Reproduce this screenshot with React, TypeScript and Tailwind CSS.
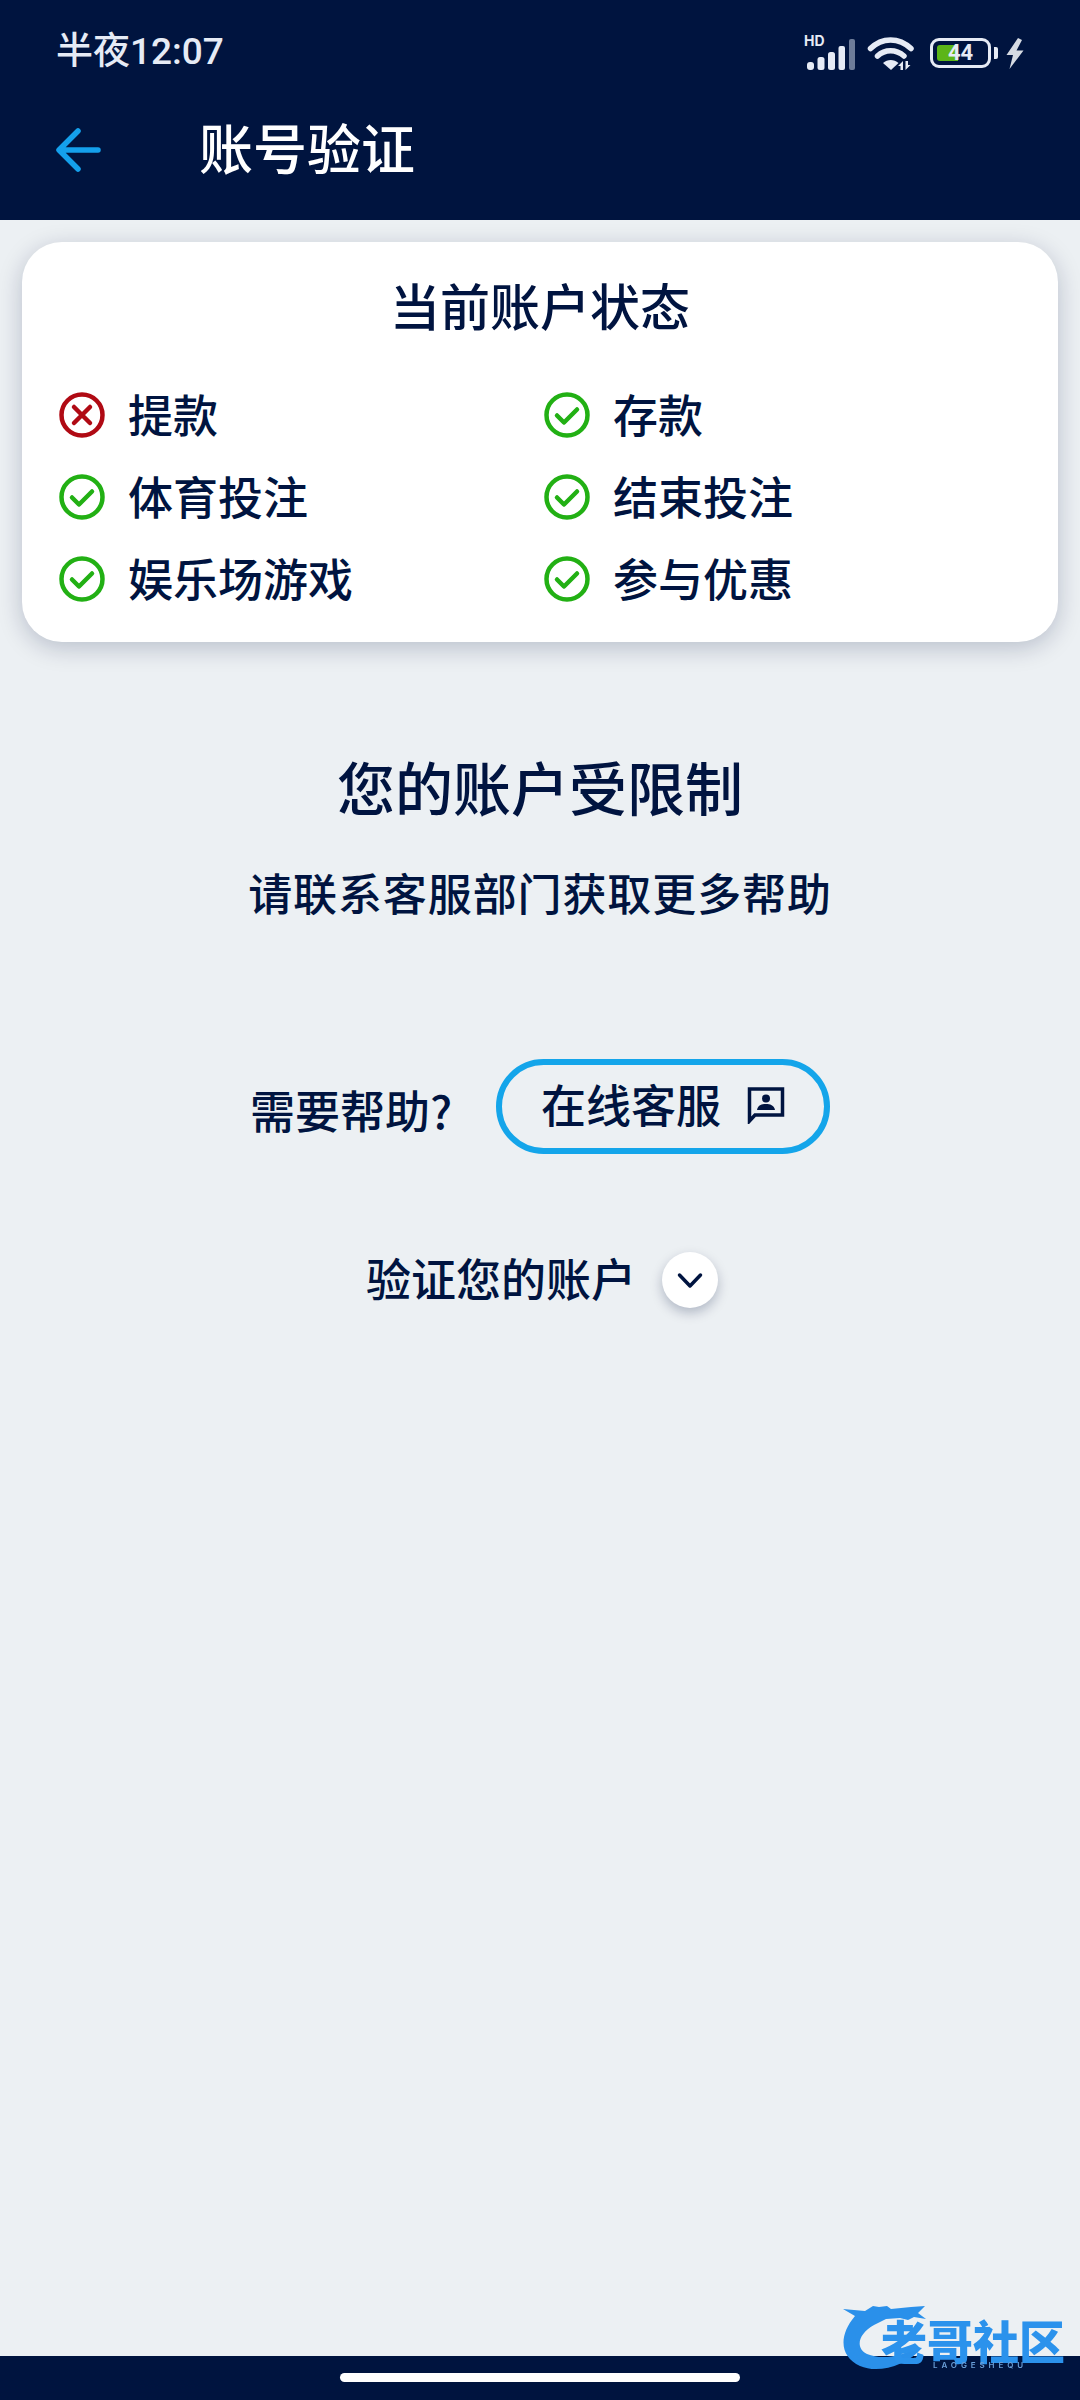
const CJK = "font-['Noto_Sans_CJK_SC','Noto_Sans',sans-serif]";

function Check() {
  return (
    <svg width="46" height="46" viewBox="0 0 46 46" fill="none" className="shrink-0">
      <circle cx="23" cy="23" r="20.5" stroke="#22b014" strokeWidth="4.500" />
      <path d="M13 23.500l7 7L33 17.500" stroke="#22b014" strokeWidth="4.500" strokeLinecap="round" strokeLinejoin="round" />
    </svg>
  );
}

function Cross() {
  return (
    <svg width="46" height="46" viewBox="0 0 46 46" fill="none" className="shrink-0">
      <circle cx="23" cy="23" r="20.5" stroke="#b00a14" strokeWidth="4.500" />
      <path d="M15 15l16 16M31 15L15 31" stroke="#b00a14" strokeWidth="4.500" strokeLinecap="round" />
    </svg>
  );
}

function Status({ ok, label }: { ok: boolean; label: string }) {
  return (
    <div className="flex h-[82px] items-center gap-[23px]">
      {ok ? <Check /> : <Cross />}
      <span className="-mt-[3px] text-[45px] leading-[60px] font-medium text-[#001440]">{label}</span>
    </div>
  );
}

function StatusIcons() {
  return (
    <div className="flex items-center pr-[56px] pt-[2px]">
      <div className="relative h-[34px] w-[52px]">
        <span className="absolute left-0 -top-[4px] font-['Inter',sans-serif] text-[14px] leading-[18px] font-bold text-[#e6ebf5]">HD</span>
        <svg width="52" height="34" viewBox="0 0 52 34" fill="none">
          <rect x="3" y="26" width="7" height="8" rx="3" fill="#e6ebf5" />
          <rect x="13.500" y="21" width="7" height="13" rx="2.500" fill="#e6ebf5" />
          <rect x="24" y="16" width="7" height="18" rx="2.500" fill="#e6ebf5" />
          <rect x="34.500" y="10" width="6.500" height="24" rx="2" fill="#e6ebf5" />
          <rect x="45" y="3" width="6" height="31" rx="2" fill="#6d7c99" />
        </svg>
      </div>
      <svg width="50" height="36" viewBox="0 0 50 36" fill="none" className="ml-[11px]">
        <path d="M3.500 13.500C15 2 32 2 44 13.500" stroke="#e6ebf5" strokeWidth="5.500" strokeLinecap="round" />
        <path d="M10.500 21C18 14 29 14 37 21" stroke="#e6ebf5" strokeWidth="5.500" strokeLinecap="round" />
        <path d="M16 28c4.500-4 11-4 15.500 0L24 35z" fill="#e6ebf5" />
        <path d="M36 35v-9l-5 5h2.500v4zM38.500 26v9l5-5H41v-4z" fill="#e6ebf5" />
      </svg>
      <div className="relative ml-[13px] h-[30px] w-[61px] rounded-[9px] border-[3px] border-[#e6ebf5]">
        <div className="absolute left-[4px] top-[4px] h-[16px] w-[21px] rounded-l-[3px] bg-[#5cb518]" />
        <div className="absolute inset-0 flex items-center justify-center font-['Roboto',sans-serif] text-[22px] leading-[24px] font-bold text-[#e6ebf5]">44</div>
      </div>
      <div className="ml-[3px] h-[12px] w-[4px] rounded-r-[2px] bg-[#e6ebf5]" />
      <svg width="18" height="31" viewBox="0 0 18 31" className="ml-[8px]">
        <path d="M12 0L0.500 17H7L3.500 31 17.500 12.500H10.500L16 2z" fill="#d6dbe3" />
      </svg>
    </div>
  );
}

function Watermark() {
  return (
    <div className="pointer-events-none absolute left-[840px] top-[2300px] h-[80px] w-[240px] blur-[0.6px]">
      <svg width="240" height="80" viewBox="0 0 240 80" fill="none" className="absolute left-0 top-0">
        <path d="M3 9l22 2 8-5 6 1 8-1 4 3 10-1 10-1 14-1-7 7 8 6-12-2-6 3-8-2-14 1-12 6C18 34 15 48 27 54c14 6 34 3 50-7l5 1C66 66 38 74 20 66 0 57-2 36 15 16L3 9z" fill="#2a90ea" />
      </svg>
      <div className="absolute left-[41px] top-[21px] whitespace-nowrap text-[46px] leading-[36px] font-black text-[#2b92ec]">老哥社区</div>
      <div className="absolute left-[93px] top-[60px] whitespace-nowrap font-['Inter',sans-serif] text-[8px] leading-[10px] font-semibold tracking-[3.9px] text-[#6a9fd8]">LAOGESHEQU</div>
    </div>
  );
}

export default function App() {
  return (
    <div className={`relative flex h-[2400px] w-[1080px] flex-col overflow-hidden bg-[#ecf0f3] ${CJK}`}>
      <header className="h-[220px] shrink-0 bg-[#00143f]">
        <div className="flex h-[104px] items-center justify-between pl-[56px]">
          <span className="font-['Roboto','Noto_Sans_CJK_SC',sans-serif] text-[37px] leading-[50px] font-medium text-[#e6ebf5]">半夜12:07</span>
          <StatusIcons />
        </div>
        <div className="flex h-[92px] items-center pl-[55px]">
          <svg width="46" height="46" viewBox="0 0 46 46" fill="none" className="shrink-0">
            <path d="M43 23H5M23 4L4 23l19 19" stroke="#14a0ec" strokeWidth="5.500" strokeLinecap="round" strokeLinejoin="round" />
          </svg>
          <h1 className="-mt-[6px] ml-[98px] text-[54px] leading-[70px] font-medium text-white">账号验证</h1>
        </div>
      </header>

      <main className="flex flex-1 flex-col items-center">
        <section className="mt-[22px] h-[400px] w-[1036px] rounded-[40px] bg-white pl-[37px] pt-[30px] shadow-[0_6px_24px_rgba(0,20,64,0.22)]">
          <h2 className="-ml-[37px] text-center text-[50px] leading-[64px] font-medium text-[#001440]">当前账户状态</h2>
          <div className="mt-[38px] grid grid-cols-[485px_1fr]">
            <Status ok={false} label="提款" />
            <Status ok label="存款" />
            <Status ok label="体育投注" />
            <Status ok label="结束投注" />
            <Status ok label="娱乐场游戏" />
            <Status ok label="参与优惠" />
          </div>
        </section>

        <h2 className="mt-[104px] text-center text-[58px] leading-[80px] font-medium text-[#001440]">您的账户受限制</h2>
        <p className="mt-[36px] text-center text-[44px] leading-[60px] font-medium tracking-[0.9px] text-[#001440]">请联系客服部门获取更多帮助</p>

        <div className="mt-[137px] flex items-center gap-[44px]">
          <span className="mt-[7px] text-[45px] leading-[60px] font-medium text-[#001440]">需要帮助?</span>
          <button className="flex h-[95px] w-[334px] items-center justify-center gap-[26px] rounded-full border-[6px] border-[#14a5ea] text-[45px] leading-[60px] font-medium text-[#001440]">
            <span className="-mt-[6px]">在线客服</span>
            <svg width="38" height="38" viewBox="0 0 38 38" fill="none" className="-mt-[3px] shrink-0">
              <path d="M2.500 35V3h33v26H8z" stroke="#001440" strokeWidth="3.500" strokeLinejoin="miter" />
              <circle cx="19" cy="12.500" r="4" fill="#001440" />
              <path d="M10 24c1-5 5-6 9-6s8 1 9 6z" fill="#001440" />
            </svg>
          </button>
        </div>

        <div className="mt-[97px] flex items-center gap-[26px] pl-[4px]">
          <span className="-mt-[3px] text-[45px] leading-[60px] font-medium text-[#001440]">验证您的账户</span>
          <div className="flex h-[56px] w-[56px] items-center justify-center rounded-full bg-white shadow-[0_5px_12px_rgba(0,20,64,0.25)]">
            <svg width="30" height="30" viewBox="0 0 30 30" fill="none">
              <path d="M4.500 10l10.500 11 10.500-11" stroke="#001440" strokeWidth="3.500" strokeLinecap="round" strokeLinejoin="round" />
            </svg>
          </div>
        </div>
      </main>

      <footer className="flex h-[44px] shrink-0 justify-center bg-[#00143f] pt-[17px]">
        <div className="h-[9px] w-[400px] rounded-full bg-white" />
      </footer>

      <Watermark />
    </div>
  );
}
